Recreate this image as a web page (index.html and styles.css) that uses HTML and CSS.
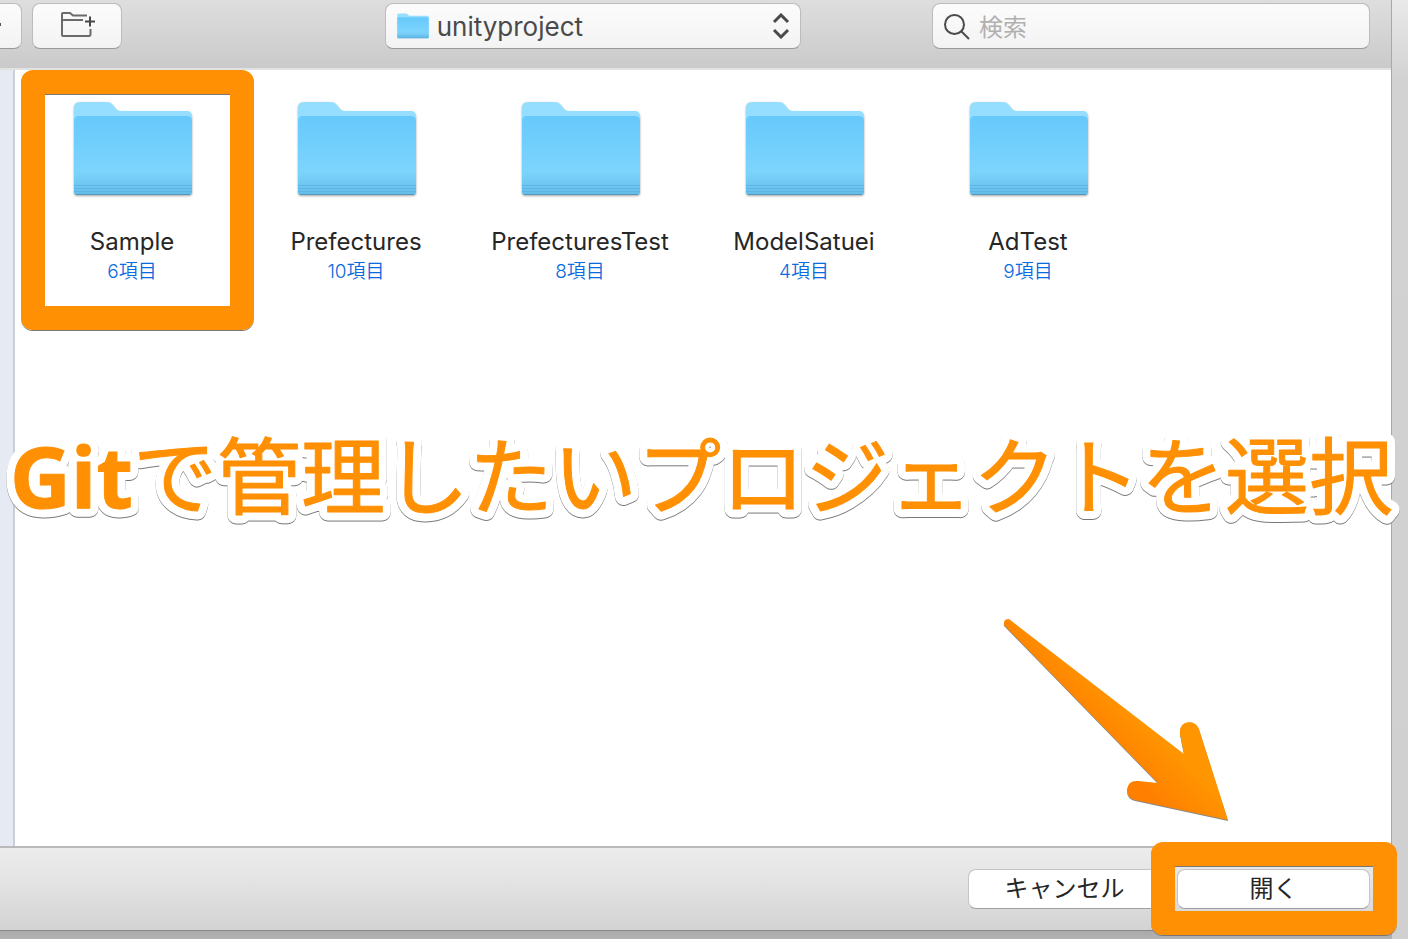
FILE: index.html
```html
<!DOCTYPE html>
<html lang="ja">
<head>
<meta charset="utf-8">
<title>unityproject</title>
<link rel="stylesheet" href="styles.css">
</head>
<body>
<svg width="0" height="0" class="defs" aria-hidden="true">
  <defs>
    <linearGradient id="front" x1="0" y1="0" x2="0" y2="1">
      <stop offset="0" stop-color="#67c9fb"/>
      <stop offset=".7" stop-color="#7cd4fd"/>
      <stop offset=".88" stop-color="#6fc6f0"/>
      <stop offset="1" stop-color="#64bbe8"/>
    </linearGradient>
    <symbol id="folder" viewBox="0 0 120 96">
      <path d="M1 91V7Q1 1 7 1H34Q37 1 39 3L44 9Q46 10 49 10H114Q119 10 119 16V91Z" fill="#95deff"/>
      <path d="M1 20Q1 15 6 15H114Q119 15 119 20V91Q119 94 116 94H4Q1 94 1 91Z" fill="url(#front)"/>
      <path d="M1 84.500H119M1 87.500H119M1 90.500H119" stroke="#5cb5e4" stroke-width="1" fill="none"/>
      <path d="M3 93.500H117" stroke="#5298c0" stroke-width="1"/>
    </symbol>
  </defs>
</svg>
<main class="dialog">
  <header class="toolbar">
    <button class="control control-cut" type="button" aria-label="表示"><span class="cut-mark"></span></button>
    <button class="control control-new" type="button" aria-label="新規フォルダ">
      <svg width="34" height="26" viewBox="0 0 34 26" fill="none" stroke="#6b6b6b" stroke-width="2">
        <path d="M26 3.500H12L9 1H2Q1 1 1 2V23Q1 24 2 24H28Q29.500 24 29.500 22V17M1 10V9Q1 8 3 8H22" />
        <path d="M24 9.500H34M29 4.500V14.500" stroke="#484848"/>
      </svg>
    </button>
    <span class="space-wide"></span>
    <div class="location">
      <svg class="location-folder" width="32" height="26"><use href="#folder"/></svg>
      <select class="control location-select" aria-label="場所"><option>unityproject</option></select>
      <svg class="location-arrows" width="18" height="26" viewBox="0 0 18 26" fill="none" stroke="#4a4a4a" stroke-width="3"><path d="M2 9L9 2L16 9M2 17L9 24L16 17"/></svg>
    </div>
    <span class="space-narrow"></span>
    <label class="control search">
      <svg width="26" height="26" viewBox="0 0 26 26" fill="none" stroke="#4a4a4a" stroke-width="2"><circle cx="10.500" cy="10.500" r="9.500"/><path d="M17 17L25 25"/></svg>
      <input type="search" placeholder="検索" aria-label="検索">
    </label>
  </header>
  <div class="body">
    <aside class="sidebar"></aside>
    <ul class="files">
      <li class="file marked"><svg class="folder"><use href="#folder"/></svg><span class="name">Sample</span><span class="count">6項目</span></li>
      <li class="file"><svg class="folder"><use href="#folder"/></svg><span class="name">Prefectures</span><span class="count">10項目</span></li>
      <li class="file"><svg class="folder"><use href="#folder"/></svg><span class="name">PrefecturesTest</span><span class="count">8項目</span></li>
      <li class="file"><svg class="folder"><use href="#folder"/></svg><span class="name">ModelSatuei</span><span class="count">4項目</span></li>
      <li class="file"><svg class="folder"><use href="#folder"/></svg><span class="name">AdTest</span><span class="count">9項目</span></li>
    </ul>
  </div>
  <footer class="footer">
    <button class="action" type="button">キャンセル</button>
    <div class="open marked"><button class="action" type="button">開く</button></div>
  </footer>
  <svg class="caption" width="1408" height="120">
    <use href="#caption-text" class="caption-halo"/>
    <text id="caption-text" x="10" y="92"><tspan class="caption-latin">Git</tspan>で管理したいプロジェクトを選択</text>
  </svg>
  <svg class="arrow" width="230" height="206" viewBox="0 0 230 206" aria-hidden="true">
    <defs>
      <linearGradient id="shade" gradientUnits="userSpaceOnUse" x1="120" y1="148" x2="154" y2="114">
        <stop offset="0" stop-color="#ff8000"/>
        <stop offset="1" stop-color="#ff9500"/>
      </linearGradient>
    </defs>
    <path d="M7 1L182 136L178 116Q177 105 187 104Q194 104 197 111L226 202L133 182Q125 180 125 172Q126 162 136 163L156 165L2 7Q1 1 7 1Z" fill="url(#shade)"/>
  </svg>
</main>
</body>
</html>
```
FILE: styles.css
```css
* { box-sizing: border-box; }

body {
  margin: 0;
  min-height: 100vh;
  padding: 0 16px 8px 0;
  display: flex;
  background:
    linear-gradient(#aaa, #b2b2b2) left bottom / calc(100% - 16px) 8px no-repeat,
    linear-gradient(#e9e9e9, #d2d2d2 80px, #d0d0d0);
  font-family: Inter, "Noto Sans CJK JP", sans-serif;
  color: #262626;
  overflow: hidden;
}

.defs { position: absolute; }

button, input, select { font: inherit; color: inherit; }

.dialog {
  position: relative;
  flex: 1;
  display: flex;
  flex-direction: column;
  border-right: 1px solid #a8a8a8;
  border-bottom: 1px solid #888;
  background: #fff;
}

.toolbar {
  height: 70px;
  padding: 3px 21px 0 0;
  display: flex;
  align-items: flex-start;
  border-bottom: 2px solid #e2e2e2;
  background: linear-gradient(#dedede, #cacaca);
}

.control {
  height: 46px;
  border: 1px solid #bcbcbc;
  border-bottom-color: #999;
  border-radius: 8px;
  background: linear-gradient(#fcfcfc, #f3f3f3);
}

.control-cut {
  width: 22px;
  margin-right: 10px;
  padding: 0;
  border-left: 0;
  border-radius: 0 8px 8px 0;
}

.cut-mark {
  display: block;
  width: 1px;
  height: 3px;
  margin-bottom: 4px;
  background: #555;
}

.control-new {
  width: 90px;
  padding: 0;
  display: flex;
  justify-content: center;
  align-items: center;
}

.control-new svg { margin: 0 0 2px 2px; }

.space-wide { flex: 2; }
.space-narrow { flex: 1; }

.location { position: relative; width: 416px; }

.location-select {
  width: 100%;
  padding: 1px 51px 0;
  appearance: none;
  font-size: 26px;
  color: #4a4a4a;
}

.location-folder { position: absolute; left: 12px; top: 10px; }
.location-arrows { position: absolute; right: 11px; top: 10px; pointer-events: none; }

.search {
  width: 438px;
  padding: 2px 9px 0 11px;
  display: flex;
  align-items: center;
  gap: 9px;
}

.search input {
  flex: 1;
  min-width: 0;
  border: 0;
  padding: 0;
  background: none;
  font-size: 24px;
}

.search input::placeholder { color: #b0b0b0; }

.body { flex: 1; display: flex; }

.sidebar {
  width: 15px;
  background: #e5eaf3;
  border-right: 2px solid #cbd0d8;
}

.files {
  flex: 1;
  margin: 0;
  padding: 31px 6px;
  list-style: none;
  display: flex;
  flex-wrap: wrap;
  align-content: flex-start;
}

.file {
  position: relative;
  width: 224px;
  display: flex;
  flex-direction: column;
  align-items: center;
}

.folder {
  width: 120px;
  height: 96px;
  filter: drop-shadow(0 1px 1px rgba(0, 0, 0, .35));
}

.name { margin: 30px 2px 0 0; font-size: 24px; line-height: 30px; }

.count {
  margin-right: 2px;
  font-size: 19px;
  line-height: 29px;
  font-weight: 350;
  color: #0a6ae0;
}

.marked::after {
  content: "";
  position: absolute;
  border: 24px solid #ff9003;
  border-radius: 12px;
  box-shadow: 0 1px 0 #777, inset 0 1px 0 #777;
  pointer-events: none;
}

.file.marked::after { left: 0; right: -9px; top: -31px; bottom: -44px; }

.footer {
  padding: 21px 21px 21px 20px;
  display: flex;
  justify-content: flex-end;
  gap: 16px;
  border-top: 2px solid #b9b9b9;
  background: linear-gradient(#ececec, #e5e5e5 35%, #d3d3d3);
}

.action {
  display: block;
  width: 193px;
  height: 40px;
  padding: 0;
  border: 1px solid #c4c4c4;
  border-bottom-color: #a0a0a0;
  border-radius: 8px;
  background: #fff;
  font-size: 24px;
  line-height: 38px;
}

.open { position: relative; }
.open.marked::after { left: -26px; right: -27px; top: -27px; bottom: -26px; }

.caption {
  position: absolute;
  left: 0;
  top: 416px;
  overflow: visible;
  font-family: "Noto Sans CJK JP", sans-serif;
  font-size: 84px;
  font-weight: 400;
  fill: #ff9003;
  stroke: #ff9003;
  stroke-width: 1px;
  stroke-linejoin: round;
}

.caption-halo {
  stroke: #fff;
  stroke-width: 17px;
  filter: drop-shadow(0 1px 0 #777);
}

.caption-latin { font-family: "Open Sans", sans-serif; font-weight: 700; }

.arrow {
  position: absolute;
  right: 159px;
  bottom: 106px;
  filter: drop-shadow(0 1px 0 #888);
}
```
